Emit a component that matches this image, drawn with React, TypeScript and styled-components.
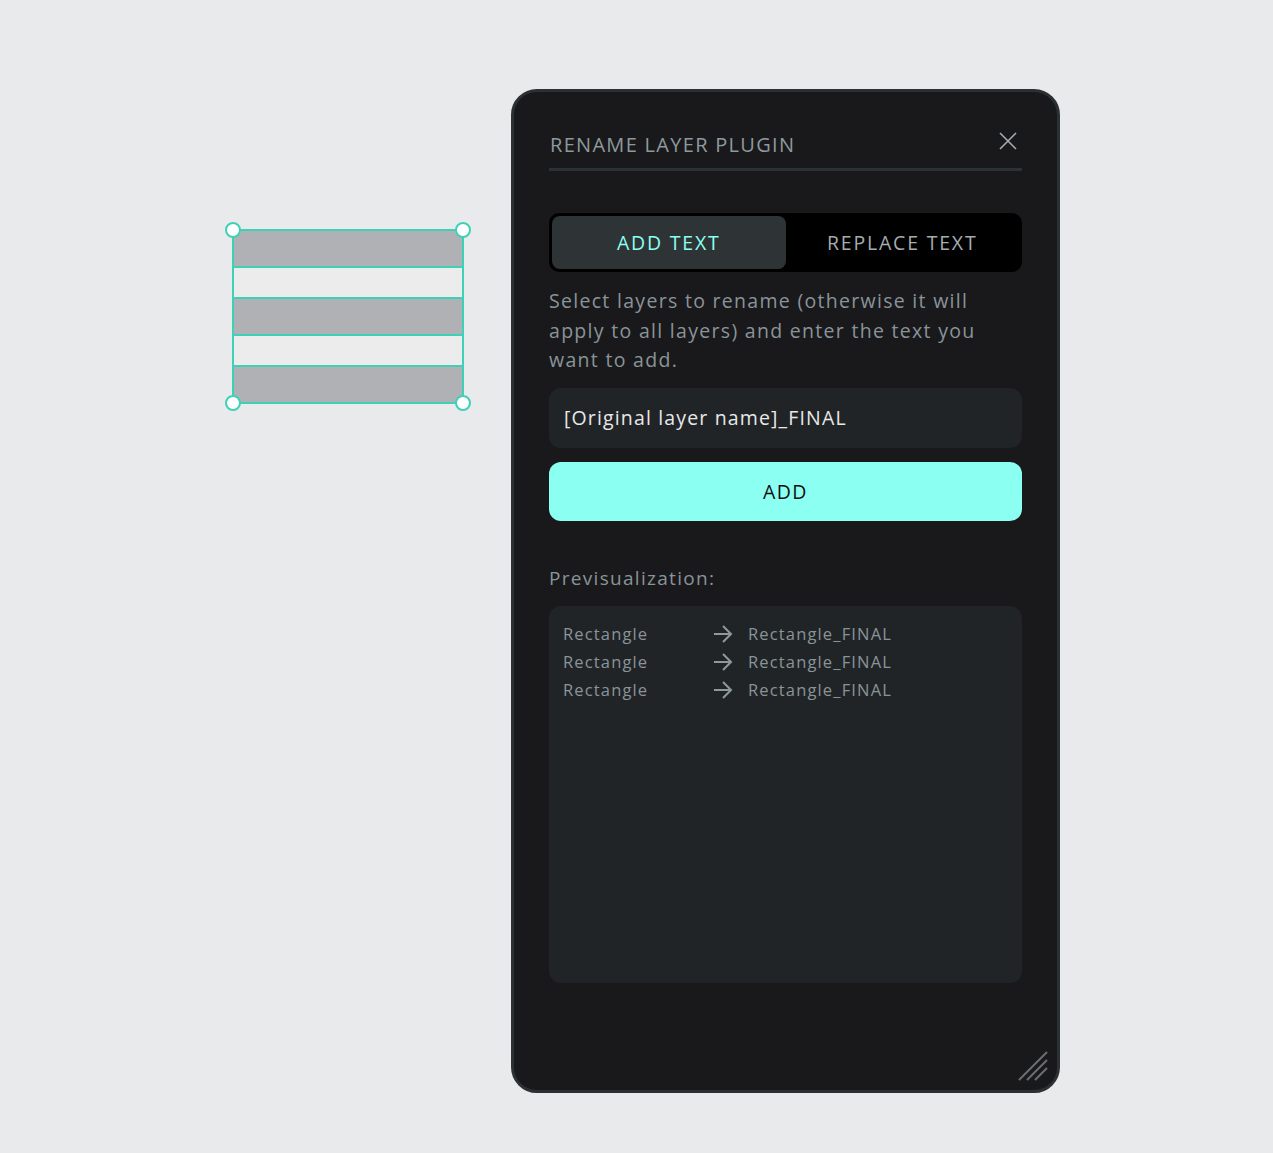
import React from "react";
import styled, { createGlobalStyle } from "styled-components";

const GlobalStyle = createGlobalStyle`
  html, body {
    margin: 0;
    padding: 0;
    background: #e9eaeb;
  }
  body {
    font-family: "Open Sans", "Noto Sans", sans-serif;
  }
`;

const Page = styled.div`
  display: flex;
  align-items: flex-start;
  gap: 47px;
  width: 1273px;
  height: 1153px;
  box-sizing: border-box;
  padding: 89px 0 0 232px;
`;

const Selection = styled.div`
  position: relative;
  margin-top: 140px;
  width: 232px;
  display: flex;
  flex-direction: column;
  border: 2px solid #3fd1b7;
  box-sizing: border-box;
`;

const Layer = styled.div<{ $filled?: boolean }>`
  height: ${({ $filled }) => ($filled ? 35 : 29)}px;
  background: ${({ $filled }) => ($filled ? "#b0b1b4" : "#ececed")};
  & + & {
    border-top: 2px solid #3fd1b7;
  }
`;

const Handle = styled.span<{ $x: "left" | "right"; $y: "top" | "bottom" }>`
  position: absolute;
  ${({ $x }) => $x}: -9px;
  ${({ $y }) => $y}: -9px;
  width: 12px;
  height: 12px;
  border-radius: 50%;
  background: #fff;
  border: 2px solid #3fd1b7;
`;

const Panel = styled.div`
  position: relative;
  width: 549px;
  height: 1004px;
  box-sizing: border-box;
  background: #19191b;
  border: 3px solid #2b3032;
  border-radius: 26px;
  padding: 39px 35px 0 35px;
  display: flex;
  flex-direction: column;
`;

const Header = styled.div`
  display: flex;
  align-items: center;
  justify-content: space-between;
  padding: 0 0 10px 1px;
  border-bottom: 3px solid #2b3134;
`;

const Title = styled.h1`
  margin: 0;
  font-size: 20px;
  font-weight: 500;
  letter-spacing: 1.3px;
  color: #8e999e;
`;

const CloseButton = styled.button`
  display: flex;
  background: none;
  border: 0;
  padding: 0;
  margin: -8px 5px 0 0;
  cursor: pointer;
`;

const Tabs = styled.div`
  margin-top: 42px;
  display: flex;
  background: #000;
  border-radius: 10px;
  padding: 3px;
  height: 59px;
  box-sizing: border-box;
`;

const Tab = styled.div<{ $active?: boolean }>`
  flex: 1;
  display: flex;
  align-items: center;
  justify-content: center;
  border-radius: 8px;
  font-size: 19.5px;
  letter-spacing: 1.8px;
  background: ${({ $active }) => ($active ? "#2e3436" : "transparent")};
  color: ${({ $active }) => ($active ? "#8cfff0" : "#a4acb0")};
`;

const Description = styled.p`
  margin: 14px 0 0 0;
  max-width: 432px;
  font-size: 19.5px;
  line-height: 29.5px;
  letter-spacing: 1.3px;
  color: #89949a;
`;

const Input = styled.div`
  margin-top: 13px;
  height: 60px;
  display: flex;
  align-items: center;
  padding: 0 15px;
  background: #212426;
  border-radius: 12px;
  font-size: 19.5px;
  letter-spacing: 1.15px;
  color: #e8e8e8;
`;

const AddButton = styled.button`
  margin-top: 14px;
  height: 59px;
  border: 0;
  border-radius: 12px;
  background: #8cfff3;
  color: #0e0e0e;
  font-family: inherit;
  font-size: 19.5px;
  letter-spacing: 1.4px;
`;

const SectionLabel = styled.div`
  margin-top: 44px;
  font-size: 19px;
  letter-spacing: 1.3px;
  color: #89949a;
`;

const Preview = styled.div`
  margin-top: 15px;
  height: 377px;
  background: #212426;
  border-radius: 12px;
  padding: 14px 14px;
  box-sizing: border-box;
`;

const PreviewRow = styled.div`
  display: grid;
  grid-template-columns: 149px 36px auto;
  align-items: center;
  height: 28px;
  font-size: 16.5px;
  letter-spacing: 1.15px;
  color: #89949a;
`;

const Grip = styled.svg`
  position: absolute;
  right: 9px;
  bottom: 9px;
`;

const rows = ["Rectangle", "Rectangle", "Rectangle"];

const Arrow = () => (
  <svg width="22" height="20" viewBox="0 0 22 20" fill="none">
    <path d="M2 10h17M11 2l8 8-8 8" stroke="#8e999e" strokeWidth="2" />
  </svg>
);

export default function App() {
  return (
    <>
      <GlobalStyle />
      <Page>
        <Selection>
          <Layer $filled />
          <Layer />
          <Layer $filled />
          <Layer />
          <Layer $filled />
          <Handle $x="left" $y="top" />
          <Handle $x="right" $y="top" />
          <Handle $x="left" $y="bottom" />
          <Handle $x="right" $y="bottom" />
        </Selection>
        <Panel>
          <Header>
            <Title>RENAME LAYER PLUGIN</Title>
            <CloseButton aria-label="Close">
              <svg width="18" height="18" viewBox="0 0 18 18">
                <path d="M1 1l16 16M17 1L1 17" stroke="#a4acb0" strokeWidth="1.6" />
              </svg>
            </CloseButton>
          </Header>
          <Tabs>
            <Tab $active>ADD TEXT</Tab>
            <Tab>REPLACE TEXT</Tab>
          </Tabs>
          <Description>
            Select layers to rename (otherwise it will apply to all layers) and enter the text you want to add.
          </Description>
          <Input>[Original layer name]_FINAL</Input>
          <AddButton>ADD</AddButton>
          <SectionLabel>Previsualization:</SectionLabel>
          <Preview>
            {rows.map((name, i) => (
              <PreviewRow key={i}>
                <span>{name}</span>
                <Arrow />
                <span>{name}_FINAL</span>
              </PreviewRow>
            ))}
          </Preview>
          <Grip width="30" height="30" viewBox="0 0 30 30">
            <path d="M1 29L29 1M9 29L29 9M17 29L29 17" stroke="#6a6e70" strokeWidth="2" />
          </Grip>
        </Panel>
      </Page>
    </>
  );
}
